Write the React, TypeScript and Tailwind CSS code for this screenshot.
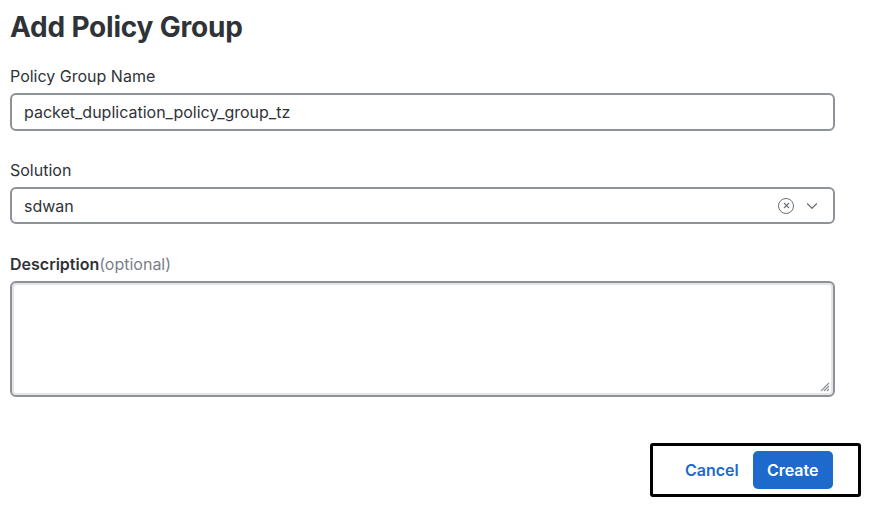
import { X, ChevronDown } from 'lucide-react';

export default function App() {
  return (
    <div
      className="w-[878px] h-[506px] bg-white overflow-hidden text-[#2f3338]"
      style={{ fontFamily: 'Inter, "Liberation Sans", sans-serif' }}
    >
      <div className="pl-[10px] w-[835px]">
        <h1 className="pt-[9px] text-[28px] leading-[36px] font-bold tracking-[-0.2px] text-[#2f3338]">
          Add Policy Group
        </h1>

        {/* Name */}
        <label className="block mt-[21px] text-[16px] leading-[20px] text-[#2f3338]">
          Policy Group Name
        </label>
        <div className="mt-[7px] h-[38px] flex items-center rounded-[6px] border-2 border-[#8d9298] px-[12px] text-[16px] text-[#2f3338]">
          packet_duplication_policy_group_tz
        </div>

        {/* Solution */}
        <label className="block mt-[29px] text-[16px] leading-[20px] text-[#2f3338]">Solution</label>
        <div className="mt-[7px] h-[37px] flex items-center justify-between rounded-[6px] border-2 border-[#8d9298] pl-[12px] pr-[12px] text-[16px] text-[#2f3338]">
          <span>sdwan</span>
          <div className="flex items-center gap-[9px] text-[#6b7076]">
            <span className="flex h-[16px] w-[16px] items-center justify-center rounded-full border-[1.5px] border-[#6b7076]">
              <X className="h-[9px] w-[9px]" strokeWidth={3} />
            </span>
            <ChevronDown className="h-[18px] w-[18px]" strokeWidth={1.6} />
          </div>
        </div>

        {/* Description */}
        <div className="mt-[30px] text-[16px] leading-[20px]">
          <span className="font-semibold text-[#2f3338]">Description</span>
          <span className="text-[#7b8086]">(optional)</span>
        </div>
        <div className="relative mt-[7px] h-[116px] rounded-[6px] border-2 border-[#8d9298] shadow-[inset_0_0_0_2px_#e3e5e8]">
          <svg className="absolute right-[3px] bottom-[3px] h-[12px] w-[12px]" viewBox="0 0 12 12">
            <path d="M11 3 L3 11 M11 6 L6 11 M11 9 L9 11" stroke="#8d9298" strokeWidth="1.2" />
          </svg>
        </div>
      </div>

      {/* Footer actions */}
      <div className="mt-[46px] flex justify-end pr-[17px]">
        <div className="flex h-[54px] w-[211px] items-center rounded-[3px] border-[3px] border-black pl-[32px]">
          <button className="text-[16px] font-semibold text-[#1d69cc]">Cancel</button>
          <button className="ml-[14px] h-[38px] w-[80px] rounded-[5px] bg-[#1d69cc] text-[16px] font-semibold text-white">
            Create
          </button>
        </div>
      </div>
    </div>
  );
}
